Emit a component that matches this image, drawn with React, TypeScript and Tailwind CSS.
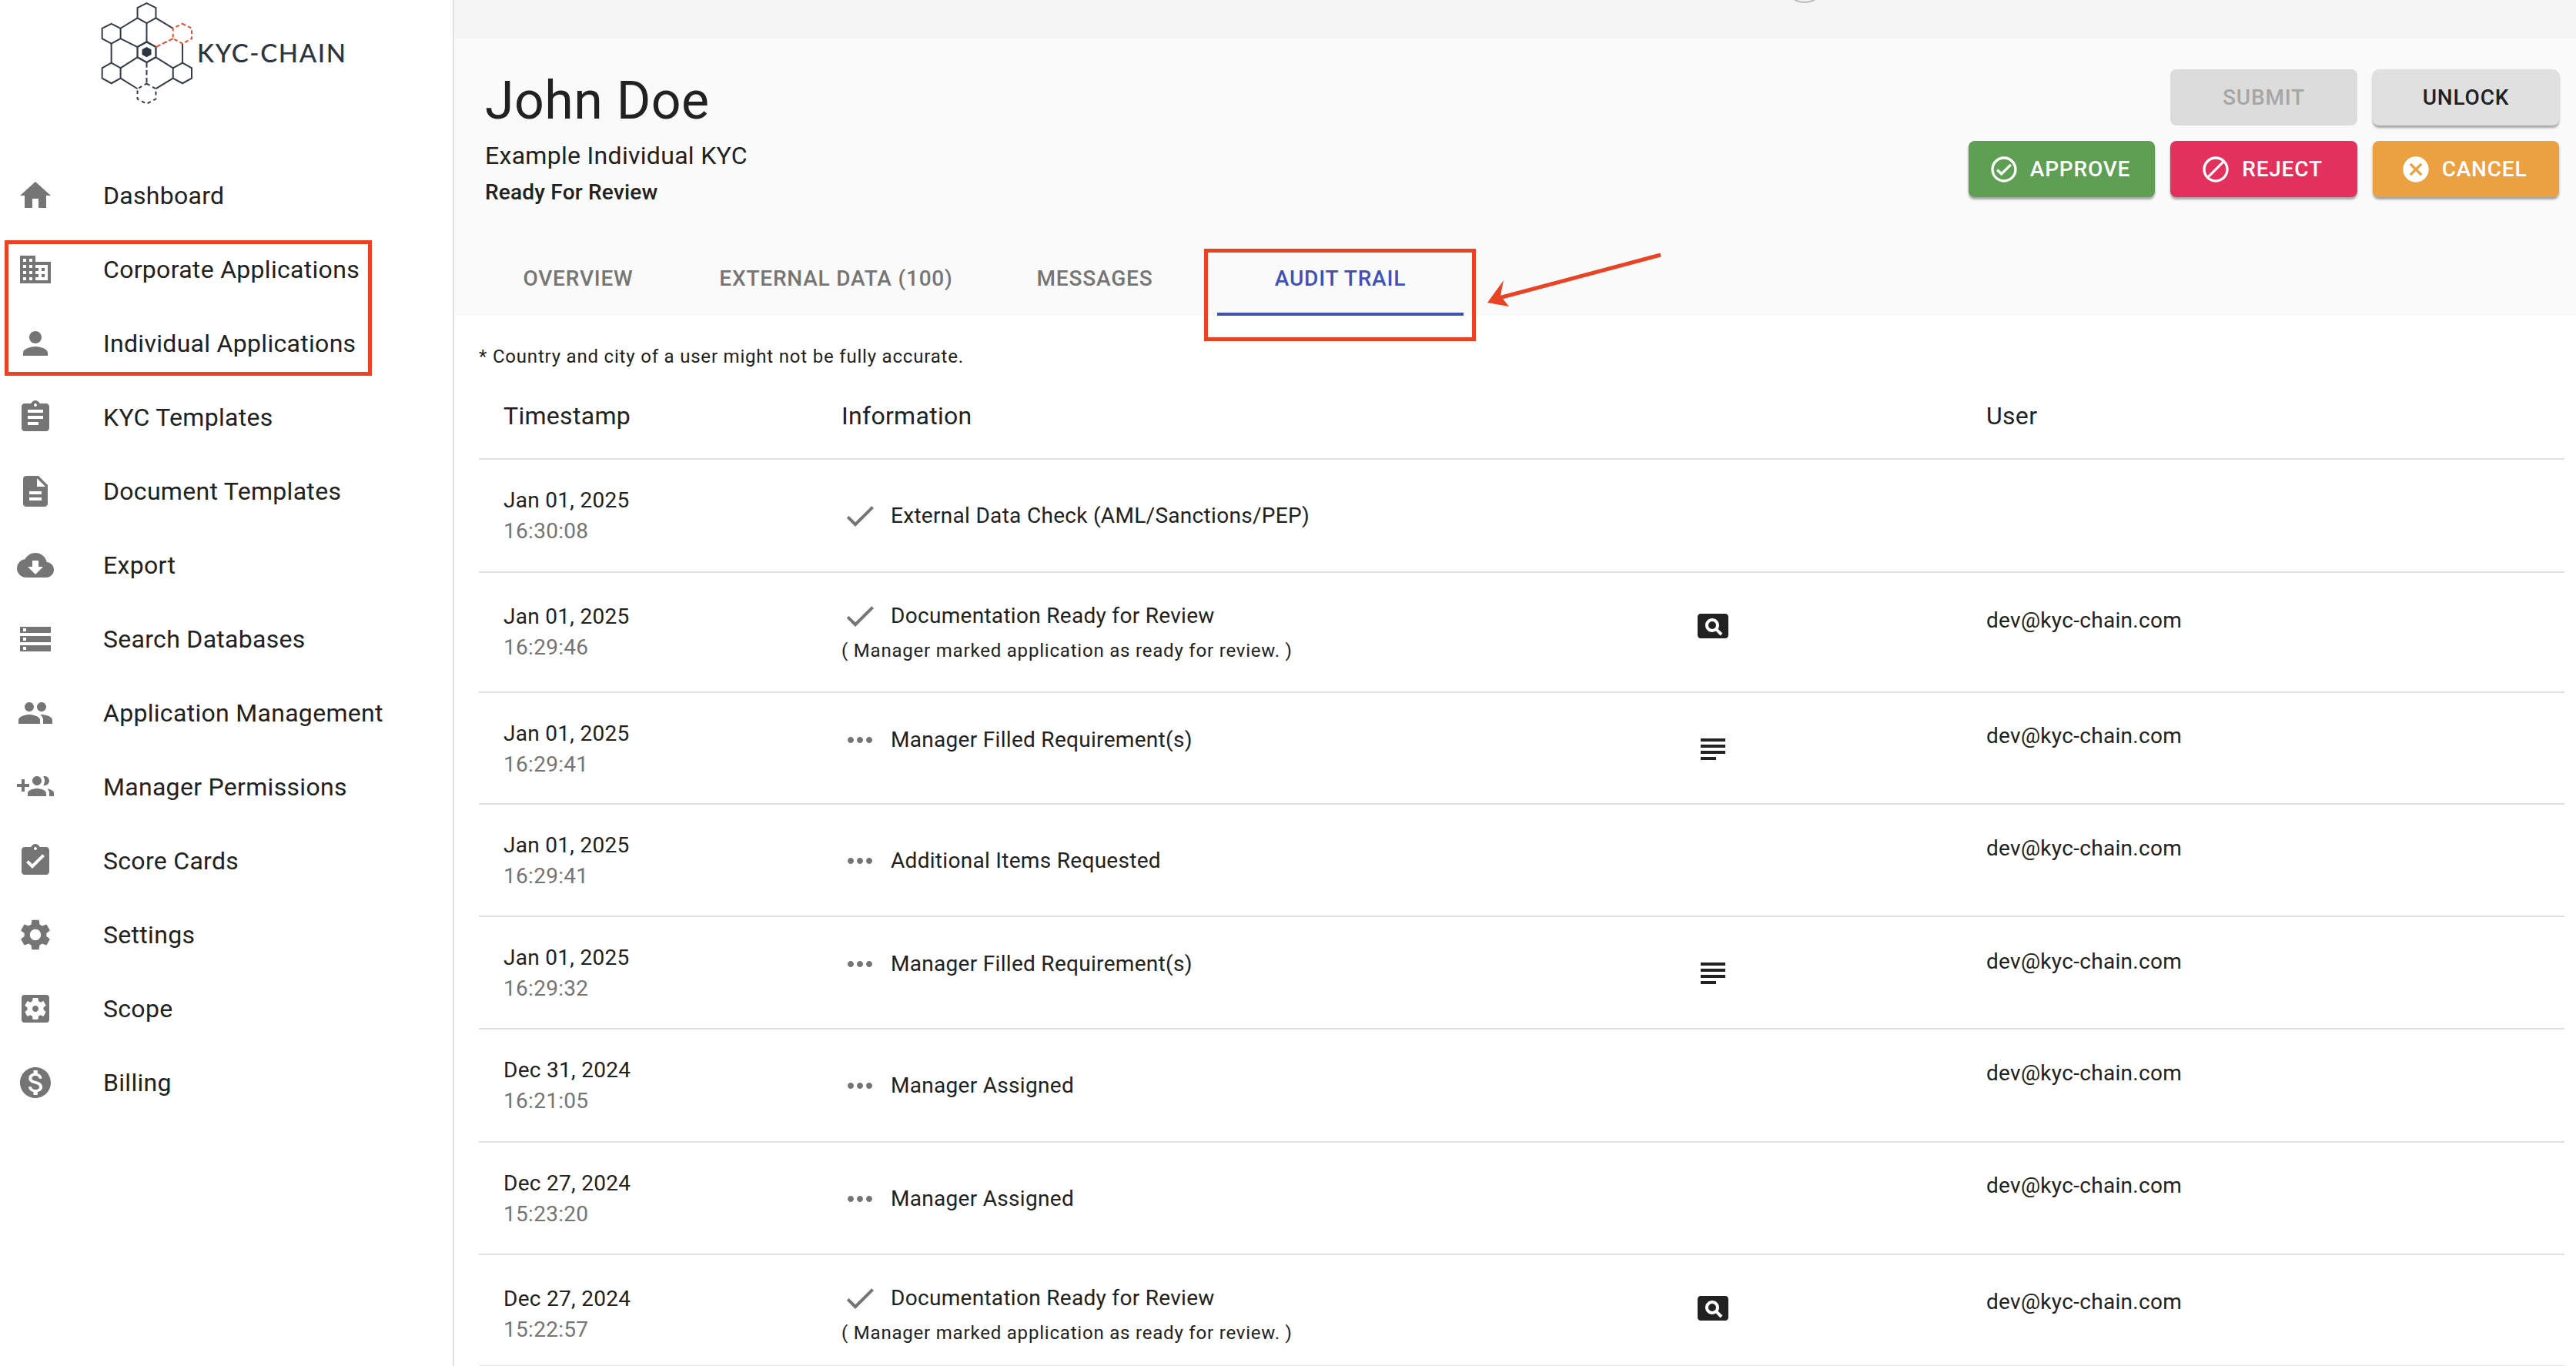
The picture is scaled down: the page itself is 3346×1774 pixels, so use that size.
import type { ReactNode } from "react";
import {
  MdAssignment,
  MdAssignmentTurnedIn,
  MdCancel,
  MdCheck,
  MdCloudDownload,
  MdDescription,
  MdDoNotDisturbAlt,
  MdDomain,
  MdHome,
  MdMonetizationOn,
  MdMoreHoriz,
  MdOutlineCheckCircle,
  MdPageview,
  MdPeople,
  MdPerson,
  MdSettings,
  MdSettingsApplications,
  MdStorage,
  MdSubject,
} from "react-icons/md";

// plus sits on the left here, the package's MdGroupAdd has it on the right
function GroupAdd() {
  return (
    <svg width="1em" height="1em" viewBox="0 0 24 24" fill="currentColor">
      <path d="M8 10H5V7H3v3H0v2h3v3h2v-3h3v-2zm10 1c1.66 0 2.99-1.34 2.99-3S19.66 5 18 5c-.32 0-.63.05-.91.14.57.81.9 1.79.9 2.86s-.34 2.04-.9 2.86c.28.09.59.14.91.14zm-5 0c1.66 0 2.99-1.34 2.99-3S14.66 5 13 5c-1.66 0-3 1.34-3 3s1.34 3 3 3zm6.62 2.16c.83.73 1.38 1.66 1.38 2.84v2h3v-2c0-1.54-2.37-2.49-4.38-2.84zM13 13c-2 0-6 1-6 3v2h12v-2c0-2-4-3-6-3z" />
    </svg>
  );
}

const nav = [
  { label: "Dashboard", icon: <MdHome /> },
  { label: "Corporate Applications", icon: <MdDomain /> },
  { label: "Individual Applications", icon: <MdPerson /> },
  { label: "KYC Templates", icon: <MdAssignment /> },
  { label: "Document Templates", icon: <MdDescription /> },
  { label: "Export", icon: <MdCloudDownload /> },
  { label: "Search Databases", icon: <MdStorage /> },
  { label: "Application Management", icon: <MdPeople /> },
  { label: "Manager Permissions", icon: <GroupAdd /> },
  { label: "Score Cards", icon: <MdAssignmentTurnedIn /> },
  { label: "Settings", icon: <MdSettings /> },
  { label: "Scope", icon: <MdSettingsApplications /> },
  { label: "Billing", icon: <MdMonetizationOn /> },
];

const EMAIL = "dev@kyc-chain.com";
const READY_NOTE = "( Manager marked application as ready for review. )";

type Row = {
  date: string;
  time: string;
  kind: "check" | "dots";
  text: string;
  note?: string;
  extra?: "view" | "lines";
  user?: boolean;
  height: string;
  datePad: string;
  infoPad: string;
  userPad: string;
  extraPad: string;
};

const rows: Row[] = [
  { date: "Jan 01, 2025", time: "16:30:08", kind: "check", text: "External Data Check (AML/Sanctions/PEP)", height: "h-[147px]", datePad: "pt-[33px]", infoPad: "pt-[53px]", userPad: "pt-[37px]", extraPad: "pt-[49px]" },
  { date: "Jan 01, 2025", time: "16:29:46", kind: "check", text: "Documentation Ready for Review", note: READY_NOTE, extra: "view", user: true, height: "h-[156px]", datePad: "pt-[37px]", infoPad: "pt-[36px]", userPad: "pt-[42px]", extraPad: "pt-[45px]" },
  { date: "Jan 01, 2025", time: "16:29:41", kind: "dots", text: "Manager Filled Requirement(s)", extra: "lines", user: true, height: "h-[145px]", datePad: "pt-[33px]", infoPad: "pt-[41px]", userPad: "pt-[36px]", extraPad: "pt-[49px]" },
  { date: "Jan 01, 2025", time: "16:29:41", kind: "dots", text: "Additional Items Requested", user: true, height: "h-[146px]", datePad: "pt-[33px]", infoPad: "pt-[53px]", userPad: "pt-[37px]", extraPad: "pt-[49px]" },
  { date: "Jan 01, 2025", time: "16:29:32", kind: "dots", text: "Manager Filled Requirement(s)", extra: "lines", user: true, height: "h-[146px]", datePad: "pt-[33px]", infoPad: "pt-[41px]", userPad: "pt-[38px]", extraPad: "pt-[49px]" },
  { date: "Dec 31, 2024", time: "16:21:05", kind: "dots", text: "Manager Assigned", user: true, height: "h-[147px]", datePad: "pt-[33px]", infoPad: "pt-[53px]", userPad: "pt-[37px]", extraPad: "pt-[49px]" },
  { date: "Dec 27, 2024", time: "15:23:20", kind: "dots", text: "Manager Assigned", user: true, height: "h-[146px]", datePad: "pt-[33px]", infoPad: "pt-[53px]", userPad: "pt-[36px]", extraPad: "pt-[49px]" },
  { date: "Dec 27, 2024", time: "15:22:57", kind: "check", text: "Documentation Ready for Review", note: READY_NOTE, extra: "view", user: true, height: "h-[145px]", datePad: "pt-[37px]", infoPad: "pt-[36px]", userPad: "pt-[41px]", extraPad: "pt-[45px]" },
];

function Logo() {
  return (
    <div className="flex h-[206px] items-start pl-[130px]">
      <svg width="123" height="150" viewBox="120 0 370 450" fill="none" stroke="#333b49" strokeWidth="6">
        <path d="M302 12L338 30V70L302 90L266 70V30Z" />
        <path d="M164 92L200 110V150L164 170L128 150V110Z" />
        <path d="M164 245L200 265V305L164 325L128 305V265Z" />
        <path d="M442 245L478 265V305L442 325L405 305V265Z" />
        <path d="M302 163L338 183V223L302 243L266 223V183Z" strokeWidth="7" />
        <path d="M302 183L320 193V213L302 223L284 213V193Z" fill="#2d3543" stroke="none" />
        <path d="M266 70L200 110M338 70L405 110M302 90V163M200 150L266 183M164 170V245M200 265L266 223M338 223L405 265M442 170V245M200 305L266 346M338 346L405 305" />
        <path d="M302 243V326" strokeDasharray="20 10" />
        <path d="M302 326L338 346V386L302 405L266 386V346Z" strokeDasharray="14 12" />
        <path d="M338 183L405 150" stroke="#ee4a2b" strokeDasharray="20 8" />
        <path d="M442 92L478 110V150L442 170L405 150V110Z" stroke="#ee4a2b" strokeDasharray="14 10" strokeWidth="6" />
      </svg>
      <span className="mt-[46px] ml-[3px] font-['Lato',sans-serif] text-[33px] leading-[44px] font-medium tracking-[1.6px] text-[#2d3543]">
        KYC-CHAIN
      </span>
    </div>
  );
}

function NavItem({ label, icon }: { label: string; icon: ReactNode }) {
  return (
    <div className="flex h-24 items-center">
      <span className="flex w-[134px] pl-[22px] text-[48px] text-[#757575]">{icon}</span>
      <span className="text-[32px] tracking-[0.3px] text-[#212121]">{label}</span>
    </div>
  );
}

function HeaderButton({ children, icon, className }: { children: ReactNode; icon?: ReactNode; className: string }) {
  return (
    <div className={`flex h-[73px] items-center justify-center gap-[14px] rounded-lg text-[28px] font-medium tracking-[0.8px] ${className}`}>
      {icon}
      {children}
    </div>
  );
}

function Tab({ children, className }: { children: ReactNode; className: string }) {
  return (
    <div className={`flex h-[100px] items-start justify-center pt-[36px] text-[28px] leading-[32px] font-medium tracking-[0.8px] ${className}`}>
      {children}
    </div>
  );
}

function AuditRow({ row }: { row: Row }) {
  return (
    <div className={`flex border-b-2 border-[#e0e0e0] ${row.height}`}>
      <div className={`w-[471px] pl-8 text-[28px] leading-10 tracking-[0.3px] ${row.datePad}`}>
        <div className="text-[#212121]">{row.date}</div>
        <div className="text-[#757575]">{row.time}</div>
      </div>
      <div className={`w-[1108px] ${row.infoPad}`}>
        <div className="flex h-10 items-center">
          <span className="flex w-16 text-[48px] text-[#757575]">
            {row.kind === "check" ? <MdCheck /> : <MdMoreHoriz />}
          </span>
          <span className="text-[28px] tracking-[0.3px] text-[#212121]">{row.text}</span>
        </div>
        {row.note && <div className="mt-[7px] text-[24px] tracking-[0.8px] text-[#212121]">{row.note}</div>}
      </div>
      <div className={`w-[379px] text-[48px] text-[#212121] ${row.extraPad}`}>
        {row.extra === "view" && <MdPageview />}
        {row.extra === "lines" && <MdSubject />}
      </div>
      <div className={`text-[28px] leading-10 tracking-[0.3px] text-[#212121] ${row.userPad}`}>{row.user ? EMAIL : ""}</div>
    </div>
  );
}

export default function App() {
  return (
    <div className="relative flex h-[1774px] w-[3346px] overflow-hidden bg-white font-['Roboto',sans-serif]">
      <aside className="h-full w-[590px] shrink-0 border-r-2 border-[#e0e0e0]">
        <Logo />
        {nav.map((item) => (
          <NavItem key={item.label} {...item} />
        ))}
      </aside>

      <main className="flex min-w-0 flex-1 flex-col">
        <div className="relative h-[50px] shrink-0 overflow-hidden bg-[#f5f5f5]">
          <div className="absolute top-[-50px] left-[1727px] size-[54px] rounded-full border-2 border-[#bdbdbd]" />
        </div>
        <div className="h-[360px] shrink-0 bg-[#fafafa]">
          <div className="flex h-[260px] justify-between pr-[22px] pl-[40px]">
            <div>
              <h1 className="mt-[41px] text-[68px] leading-[80px] tracking-[0.5px] text-[#212121]">John Doe</h1>
              <div className="mt-[11px] text-[32px] leading-10 tracking-[0.3px] text-[#212121]">Example Individual KYC</div>
              <div className="mt-[10px] text-[28px] leading-[36px] font-medium tracking-[0.2px] text-[#212121]">Ready For Review</div>
            </div>
            <div className="mt-10 grid grid-cols-[242px_243px_242px] content-start gap-5">
              <HeaderButton className="col-start-2 bg-[#dcdcdc] text-[#a6a6a6]">SUBMIT</HeaderButton>
              <HeaderButton className="bg-[#e0e0e0] text-[#212121] shadow-[0_3px_3px_rgba(0,0,0,0.35)]">UNLOCK</HeaderButton>
              <HeaderButton
                className="bg-[#5f9f54] pr-[6px] text-white shadow-[0_3px_3px_rgba(0,0,0,0.35)]"
                icon={<MdOutlineCheckCircle className="text-[40px]" />}
              >
                APPROVE
              </HeaderButton>
              <HeaderButton
                className="bg-[#e3305c] pr-[6px] text-white shadow-[0_3px_3px_rgba(0,0,0,0.35)]"
                icon={<MdDoNotDisturbAlt className="text-[40px]" />}
              >
                REJECT
              </HeaderButton>
              <HeaderButton
                className="bg-[#eba042] pr-[6px] text-white shadow-[0_3px_3px_rgba(0,0,0,0.35)]"
                icon={<MdCancel className="text-[40px]" />}
              >
                CANCEL
              </HeaderButton>
            </div>
          </div>
          <div className="flex pl-[33px]">
            <Tab className="w-[256px] text-[#757575]">OVERVIEW</Tab>
            <Tab className="w-[414px] text-[#757575]">EXTERNAL DATA (100)</Tab>
            <Tab className="w-[258px] text-[#757575]">MESSAGES</Tab>
            <Tab className="ml-[30px] w-[320px] border-b-4 border-[#3f51b5] text-[#3f51b5]">AUDIT TRAIL</Tab>
          </div>
        </div>

        <div className="flex-1 pr-[15px] pl-[32px]">
          <p className="mt-[37px] text-[24px] leading-8 tracking-[0.8px] text-[#212121]">
            * Country and city of a user might not be fully accurate.
          </p>
          <div className="mt-[27px] flex h-[91px] border-b-2 border-[#e0e0e0] pt-[14px] text-[32px] leading-10 tracking-[0.3px] text-[#212121]">
            <div className="w-[471px] pl-8">Timestamp</div>
            <div className="w-[1487px]">Information</div>
            <div>User</div>
          </div>
          {rows.map((row, i) => (
            <AuditRow key={i} row={row} />
          ))}
        </div>
      </main>

      {/* annotations drawn over the screenshot */}
      <div className="absolute top-[312px] left-[6px] h-[176px] w-[477px] border-[5px] border-[#ea4225]" />
      <div className="absolute top-[323px] left-[1564px] h-[120px] w-[353px] border-[5px] border-[#ea4225]" />
      <svg className="absolute top-[320px] left-[1925px]" width="240" height="85" viewBox="0 0 240 85">
        <path d="M232 11L22 67" stroke="#ea4225" strokeWidth="5" fill="none" />
        <path d="M7 73L28 44L24 64L35 78Z" fill="#ea4225" />
      </svg>
    </div>
  );
}
